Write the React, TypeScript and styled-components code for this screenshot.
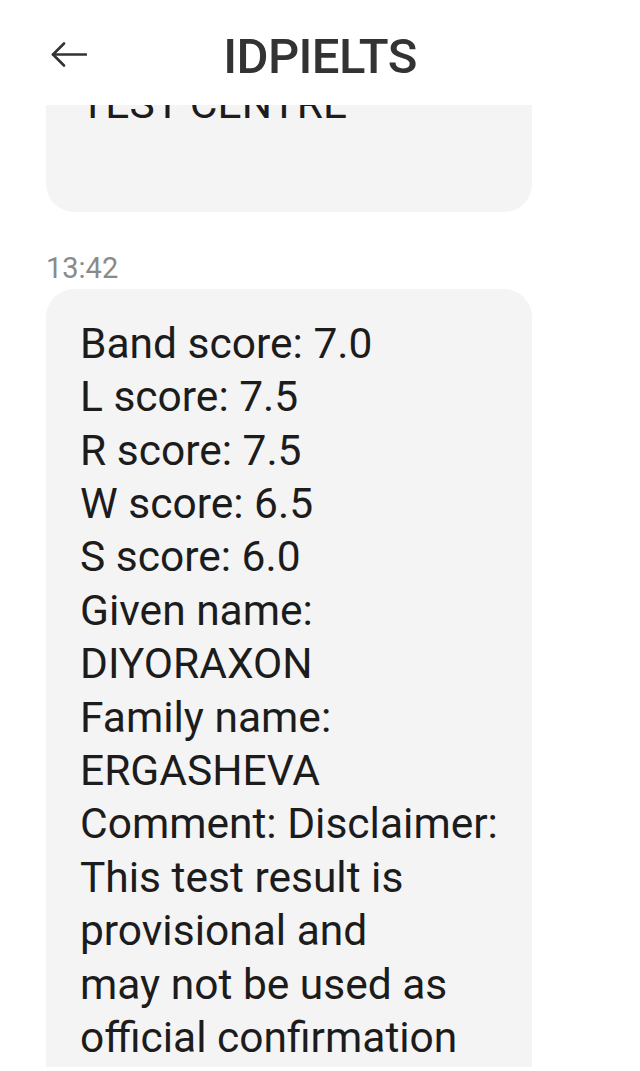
import React from "react";
import styled, { createGlobalStyle } from "styled-components";

const Global = createGlobalStyle`
  html, body { margin: 0; padding: 0; background: #ffffff; }
  body { font-family: Roboto, "Noto Sans", "Liberation Sans", sans-serif; }
`;

const Page = styled.div`
  width: 640px;
  height: 1071px;
  display: flex;
  flex-direction: column;
  background: #ffffff;
  overflow: hidden;
`;

const Header = styled.header`
  height: 105px;
  box-sizing: border-box;
  padding-top: 8px;
  display: grid;
  grid-template-columns: 1fr auto 1fr;
  align-items: center;
  background: #ffffff;
  flex: none;
  position: relative;
  z-index: 1;
`;

const BackButton = styled.button`
  justify-self: start;
  margin: 0 0 4px 51px;
  padding: 0;
  border: 0;
  background: none;
  width: 36px;
  height: 25px;
  display: flex;
  color: #333333;
`;

const Title = styled.h1`
  margin: 0;
  font-size: 49px;
  font-weight: 500;
  letter-spacing: -0.6px;
  color: #333333;
  line-height: normal;
`;

const Content = styled.main`
  flex: none;
  height: 962px;
  overflow: hidden;
  padding: 0 108px 0 46px;
`;

const Thread = styled.div`
  display: flex;
  flex-direction: column;
`;

const Bubble = styled.div<{ $offset?: number }>`
  margin-top: ${(p) => p.$offset ?? 0}px;
  background: #f4f4f4;
  border-radius: 28px;
  padding: 28px 30px 28px 34px;
  font-size: 42.5px;
  line-height: 53.4px;
  color: #1c1c1c;
  white-space: pre-line;
`;

const Time = styled.div`
  margin: 39px 0 4px;
  font-size: 29px;
  line-height: 34px;
  color: #8a8a8a;
`;

const ArrowIcon = () => (
  <svg width="36" height="25" viewBox="0 0 36 25" fill="none" stroke="currentColor" strokeWidth="2.6" strokeLinecap="round" strokeLinejoin="round">
    <path d="M35 12.5H2" />
    <path d="M13 1.5L2 12.5L13 23.5" />
  </svg>
);

const firstMessage = "TEST CENTRE\n\u00a0";

const secondMessage = [
  "Band score: 7.0",
  "L score: 7.5",
  "R score: 7.5",
  "W score: 6.5",
  "S score: 6.0",
  "Given name:",
  "DIYORAXON",
  "Family name:",
  "ERGASHEVA",
  "Comment: Disclaimer:",
  "This test result is",
  "provisional and",
  "may not be used as",
  "official confirmation",
  "of the test result.",
].join("\n");

export default function App() {
  return (
    <>
      <Global />
      <Page>
        <Header>
          <BackButton aria-label="Back">
            <ArrowIcon />
          </BackButton>
          <Title>IDPIELTS</Title>
          <span />
        </Header>
        <Content>
          <Thread>
            <Bubble $offset={-56}>{firstMessage}</Bubble>
            <Time>13:42</Time>
            <Bubble>{secondMessage}</Bubble>
          </Thread>
        </Content>
      </Page>
    </>
  );
}
